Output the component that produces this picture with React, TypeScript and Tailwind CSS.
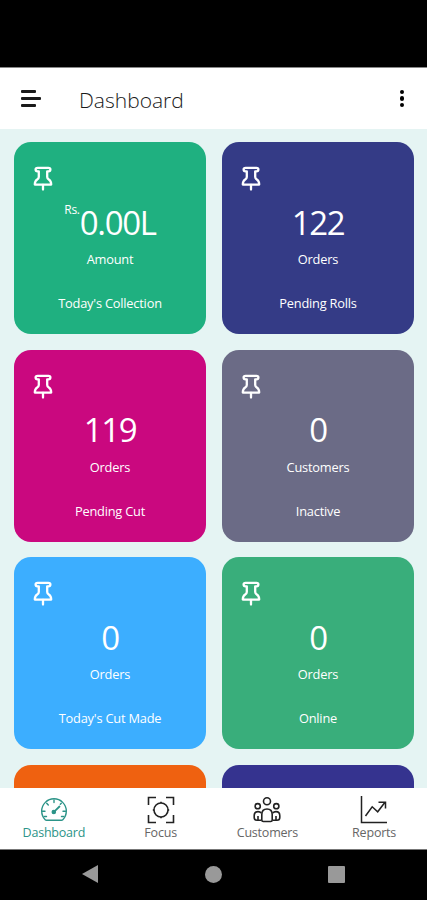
import clsx from "clsx"

const cards = [
  { value: "0.00L", prefix: "Rs.", unit: "Amount", title: "Today's Collection", color: "bg-[#1fb080]" },
  { value: "122", unit: "Orders", title: "Pending Rolls", color: "bg-[#343b86]" },
  { value: "119", unit: "Orders", title: "Pending Cut", color: "bg-[#ca087f]" },
  { value: "0", unit: "Customers", title: "Inactive", color: "bg-[#6b6b86]" },
  { value: "0", unit: "Orders", title: "Today's Cut Made", color: "bg-[#3caeff]" },
  { value: "0", unit: "Orders", title: "Online", color: "bg-[#39ae7b]" },
  { color: "bg-[#ef6110]" },
  { color: "bg-[#35338f]" },
]

function PinIcon() {
  return (
    <svg viewBox="0 0 20 26" className="h-[26px] w-5" fill="none" stroke="currentColor" strokeWidth="2.3" strokeLinejoin="round" strokeLinecap="round">
      <path d="M4.600 1.800h10.800q2 0 2 1.700t-2 1.800h-1.200V11q0 1.500 1.600 2.500 2.400 1.500 2.400 5.100H1.800q0-3.600 2.400-5.100Q5.800 12.500 5.800 11V5.300H4.600q-2-.1-2-1.800t2-1.700z" />
      <path d="M10 19v4.500" />
    </svg>
  )
}

function GaugeIcon() {
  return (
    <svg viewBox="0 0 28 28" className="size-7" fill="none" stroke="currentColor" strokeWidth="1.4" strokeLinecap="round" strokeLinejoin="round">
      <path d="M5.200 23.700A12.300 12.300 0 1 1 22.800 23.700Q22.300 24.200 21.500 24.200H6.500Q5.700 24.200 5.200 23.700z" />
      <path d="M14 4v2.500M6.700 7.200l1.600 1.700M2.500 15.200H5M25.500 15.200H23M21.300 7.200l-1 1M4.500 20.500h2M23.500 20.500h-2" />
      <path d="m15 14.800 4.500-4.300" strokeWidth="1.800" />
      <circle cx="13.800" cy="16" r="1.600" fill="currentColor" />
    </svg>
  )
}

function FocusIcon() {
  return (
    <svg viewBox="0 0 28 28" className="size-7" fill="none" stroke="currentColor" strokeWidth="1.6">
      <path d="M1.500 9V1.500H9M19 1.500h7.500V9M1.500 19v7.500H9M19 26.500h7.500V19" />
      <circle cx="14" cy="14" r="7" />
      <path d="M5.800 14H7M21 14h1.200M14 5.800V7M14 21v1.200" />
    </svg>
  )
}

function PeopleIcon() {
  return (
    <svg viewBox="0 0 28 28" className="size-7" fill="none" stroke="currentColor" strokeWidth="1.600" strokeLinejoin="round">
      <circle cx="14" cy="5.300" r="3.500" />
      <circle cx="4.700" cy="10.200" r="2.600" />
      <circle cx="23.300" cy="10.200" r="2.600" />
      <path d="M8.800 24v-5.500q0-5.500 5.200-5.500t5.200 5.500V24q0 1.500-1.500 1.500h-7.400q-1.500 0-1.500-1.500z" />
      <path d="M8.500 24.300H4q-2.800 0-2.800-2.800v-1.700q0-4.200 3.800-4.200 2.200 0 3.200 1.600M19.500 24.300H24q2.800 0 2.800-2.800v-1.700q0-4.200-3.800-4.200-2.200 0-3.200 1.600M5 20v4M23 20v4" />
    </svg>
  )
}

function ChartIcon() {
  return (
    <svg viewBox="0 0 28 28" className="size-7" fill="none" stroke="currentColor" strokeWidth="1.500">
      <path d="M1.500 0v26.500H27" />
      <path d="m5.500 20 6.700-9.200 5.500 5 7.300-9.500M18.500 6.300h7v6.200" />
    </svg>
  )
}

const tabs = [
  { icon: GaugeIcon, label: "Dashboard", active: true },
  { icon: FocusIcon, label: "Focus" },
  { icon: PeopleIcon, label: "Customers" },
  { icon: ChartIcon, label: "Reports" },
]

export default function App() {
  return (
    <div className="flex h-[900px] w-full flex-col overflow-hidden bg-[#e5f4f3] font-['Open_Sans',sans-serif]">
      <div className="h-[68px] shrink-0 border-b border-[#888888] bg-black" />

      <header className="flex h-[61px] shrink-0 items-center bg-white pl-[21px] pr-[23px] text-[#1a1a1a]">
        <div className="mb-px flex w-[58px] flex-col gap-1">
          <span className="h-[3px] w-[15px] rounded-[1px] bg-[#1a1a1a]" />
          <span className="h-[3px] w-5 rounded-[1px] bg-[#1a1a1a]" />
          <span className="h-[3px] w-[15px] rounded-[1px] bg-[#1a1a1a]" />
        </div>
        <h1 className="flex-1 pt-[3px] text-[21px] font-light leading-7">Dashboard</h1>
        <div className="flex flex-col gap-[2px]">
          <span className="size-[4.500px] rounded-full bg-black" />
          <span className="size-[4.500px] rounded-full bg-black" />
          <span className="size-[4.500px] rounded-full bg-black" />
        </div>
      </header>

      <main className="min-h-0 flex-1 overflow-hidden px-[14px] pt-[13px]">
        <div className="grid grid-cols-[192px_192px] gap-x-4 gap-y-[15.700px]">
          {cards.map((card, i) => (
            <section key={i} className={clsx("flex h-48 flex-col rounded-[17px] text-white", card.color)}>
              {card.value && (
                <>
                  <div className="pl-[19px] pt-6">
                    <PinIcon />
                  </div>
                  <div className="flex h-[61px] items-center justify-center">
                    {card.prefix && <span className="mb-[26px] text-xs leading-4 tracking-[-0.3px]">{card.prefix}</span>}
                    <span className="text-[33px] leading-10 tracking-[-1.3px]">{card.value}</span>
                  </div>
                  <p className="-mt-0.5 text-center text-[12.800px] leading-4 tracking-[-0.2px]">{card.unit}</p>
                  <p className="mt-7 text-center text-[12.800px] leading-4 tracking-[-0.2px]">{card.title}</p>
                </>
              )}
            </section>
          ))}
        </div>
      </main>

      <nav className="grid h-[61px] shrink-0 grid-cols-4 bg-white">
        {tabs.map((tab) => (
          <a key={tab.label} className={clsx("flex flex-col items-center pl-px pt-2", tab.active ? "text-[#2c9488]" : "text-[#222222]")}>
            <tab.icon />
            <span className={clsx("mt-px text-[12.500px] leading-4 tracking-[-0.2px]", !tab.active && "text-[#666666]")}>{tab.label}</span>
          </a>
        ))}
      </nav>

      <div className="flex h-[51px] shrink-0 items-center justify-between border-t border-[#777777] bg-black pb-0.5 pl-[81px] pr-[82px]">
        <svg viewBox="0 0 18 20" className="h-5 w-[18px] fill-[#999999]">
          <path d="M1 10 17 1v18z" />
        </svg>
        <span className="size-[17px] rounded-full bg-[#999999]" />
        <span className="size-[17px] rounded-[1px] bg-[#999999]" />
      </div>
    </div>
  )
}
